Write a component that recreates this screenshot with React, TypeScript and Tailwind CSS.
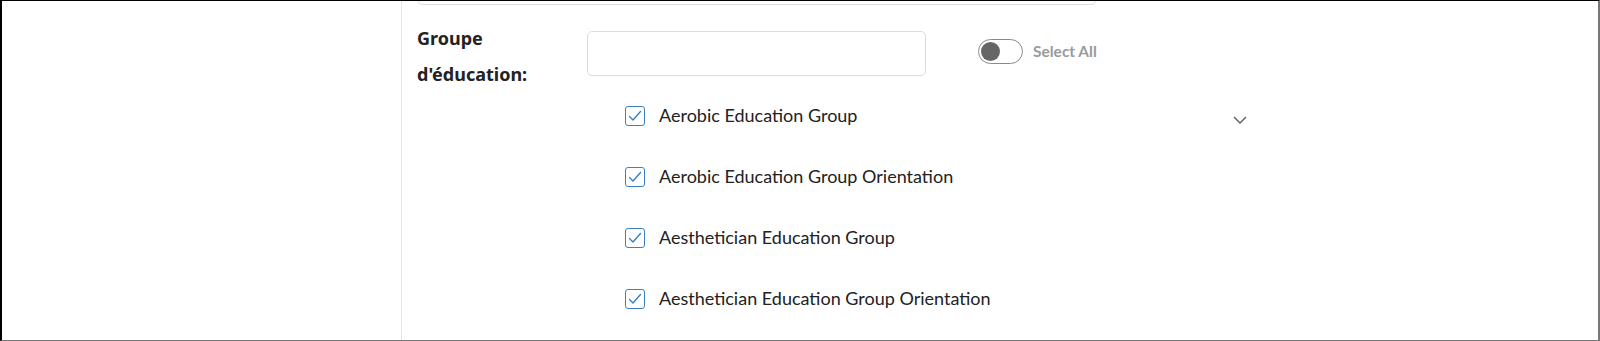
import React from "react";

const items = [
  "Aerobic Education Group",
  "Aerobic Education Group Orientation",
  "Aesthetician Education Group",
  "Aesthetician Education Group Orientation",
];

function Check() {
  return (
    <span className="flex h-[20px] w-[20px] shrink-0 items-center justify-center rounded-[3px] border border-[#3b82c4] bg-white">
      <svg width="16" height="16" viewBox="0 0 16 16" fill="none">
        <path d="M2.5 8.5 L6 12 L13.5 3.5" stroke="#2f7fc1" strokeWidth="1.3" strokeLinecap="round" strokeLinejoin="round" />
      </svg>
    </span>
  );
}

export default function App() {
  return (
    <div
      className="flex h-[341px] w-[1600px] overflow-hidden border-t border-l-2 border-b border-r-2 border-t-black border-l-black border-b-[#777] border-r-[#777] bg-white"
      style={{ fontFamily: "Lato, 'Noto Sans', sans-serif" }}
    >
      <div className="w-[399px] shrink-0" />
      <div className="flex-1 border-l border-[#e6e6e6] pl-[15px]">
        <div className="-mt-[40px] h-[44px] w-[680px] rounded-md border border-[#dedede]" />
        <div className="mt-[26px] flex h-[45px] items-start">
          <div
            className="-mt-[11px] w-[170px] text-[18px] font-bold leading-[36px] text-[#222]"
            style={{ fontFamily: "'Noto Sans', Lato, sans-serif" }}
          >
            <div>Groupe</div>
            <div>d'éducation:</div>
          </div>
          <div className="h-[45px] w-[339px] shrink-0 rounded-[5px] border border-[#dcdcdc]" />
          <div className="ml-[52px] mt-[8px] flex items-center gap-[10px]">
            <span className="flex h-[25px] w-[45px] items-center rounded-full border border-[#8a8a8a] px-[2px]">
              <span className="h-[19px] w-[19px] rounded-full bg-[#666]" />
            </span>
            <span className="text-[15.5px] font-bold text-[#9a9a9a]">Select All</span>
          </div>
        </div>
        <div className="relative ml-[208px] mt-[9px] flex flex-col">
          <svg className="absolute left-[608px] top-[31px]" width="14" height="8" viewBox="0 0 14 8" fill="none">
            <path d="M1 1 L7 7 L13 1" stroke="#666" strokeWidth="1.5" />
          </svg>
          {items.map((t) => (
            <div key={t} className="flex h-[61px] items-center gap-[14px]">
              <Check />
              <span className="text-[18px] text-[#222]">{t}</span>
            </div>
          ))}
        </div>
      </div>
    </div>
  );
}
